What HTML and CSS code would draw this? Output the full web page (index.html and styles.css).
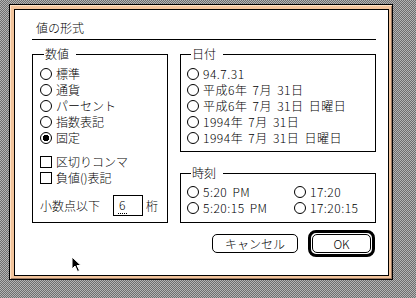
FILE: index.html
```html
<!DOCTYPE html>
<html lang="ja">
<head>
    <meta charset="UTF-8">
    <meta name="viewport" content="width=device-width, initial-scale=1.0">
    <title>値の形式</title>
    <link rel="stylesheet" href="styles.css">
</head>
<body>
    <div class="window">
        <div class="dialog">
            <div class="title">値の形式</div>

            <div class="panes">
                <fieldset class="group number">
                    <legend>数値</legend>
                    <label class="opt"><input type="radio" name="num">標準</label>
                    <label class="opt"><input type="radio" name="num">通貨</label>
                    <label class="opt"><input type="radio" name="num">パーセント</label>
                    <label class="opt"><input type="radio" name="num">指数表記</label>
                    <label class="opt"><input type="radio" name="num" checked>固定</label>

                    <div class="checks">
                        <label class="opt"><input type="checkbox">区切りコンマ</label>
                        <label class="opt"><input type="checkbox">負値()表記</label>
                    </div>

                    <div class="digits">
                        <span>小数点以下</span>
                        <span class="field"><span class="ime">6</span></span>
                        <span>桁</span>
                    </div>
                </fieldset>

                <div class="right">
                    <fieldset class="group date">
                        <legend>日付</legend>
                        <label class="opt"><input type="radio" name="date">94.7.31</label>
                        <label class="opt"><input type="radio" name="date">平成6年 7月 31日</label>
                        <label class="opt"><input type="radio" name="date">平成6年 7月 31日 日曜日</label>
                        <label class="opt"><input type="radio" name="date">1994年 7月 31日</label>
                        <label class="opt"><input type="radio" name="date">1994年 7月 31日 日曜日</label>
                    </fieldset>

                    <fieldset class="group time">
                        <legend>時刻</legend>
                        <div class="time-grid">
                            <label class="opt"><input type="radio" name="time">5:20 PM</label>
                            <label class="opt"><input type="radio" name="time">17:20</label>
                            <label class="opt"><input type="radio" name="time">5:20:15 PM</label>
                            <label class="opt"><input type="radio" name="time">17:20:15</label>
                        </div>
                    </fieldset>
                </div>
            </div>

            <div class="actions">
                <button class="btn cancel">キャンセル</button>
                <div class="default-ring">
                    <button class="btn ok">OK</button>
                </div>
            </div>
        </div>
    </div>

    <!-- マウスカーソル -->
    <svg class="cursor" width="11" height="17" viewBox="0 0 11 17">
        <path d="M1 1 L1 13 L4 10 L6.5 15.5 L8.5 14.5 L6 9.5 L10 9.5 Z" fill="#000" stroke="#fff" stroke-width="1"/>
    </svg>
</body>
</html>
```

FILE: styles.css
```css
html, body {
    margin: 0;
    height: 298px;
    overflow: hidden;
}
body {
    padding: 4px 0 0 9px;
    box-sizing: border-box;
    background: repeating-conic-gradient(#6e6e6e 0 25%, #b4b4b4 0 50%) 0 0 / 2px 2px;
    font-family: "Noto Sans CJK JP", "Noto Sans", sans-serif;
    font-size: 12px;
    font-weight: 300;
    line-height: 16px;
    color: #000;
}
.window {
    width: 384px;
    height: 276px;
    box-sizing: border-box;
    border: 1px solid #000;
    padding: 4px 3px 3px 4px;
    background: #f2c49c;
    box-shadow: inset 1px 1px 0 #ffe2c6, inset -1px -1px 0 #9c7c66;
}
.dialog {
    height: 100%;
    box-sizing: border-box;
    border: 1px solid #000;
    background: #fff;
    padding: 10px 12px 0 17px;
}
.title {
    padding: 0 0 3px 4px;
    border-bottom: 1px solid #000;
}
.panes {
    display: flex;
    gap: 12px;
    margin-top: 6px;
}
.group {
    margin: 0;
    border: 1px solid #000;
    min-width: 0;
}
.group legend {
    margin-left: 4px;
    padding: 0 7px 0 1px;
    line-height: 16px;
}
.number {
    width: 136px;
    box-sizing: border-box;
    padding: 4px 0 6px 7px;
}
.right {
    width: 196px;
}
.date {
    padding: 4px 0 5px 6px;
}
.time {
    margin-top: 13px;
    padding: 3px 0 6px 6px;
}
.date .opt,
.time .opt {
    letter-spacing: 0.5px;
    word-spacing: 2px;
}
.opt {
    display: flex;
    align-items: center;
    height: 16px;
    gap: 4px;
    white-space: nowrap;
}
.opt input {
    appearance: none;
    margin: 0;
    width: 12px;
    height: 12px;
    border: 1px solid #000;
    background: #fff;
    flex: none;
}
.opt input[type="radio"] {
    border-radius: 50%;
}
.opt input[type="radio"]:checked {
    background: radial-gradient(circle, #000 0 3px, #fff 3.5px);
}
.checks {
    margin-top: 8px;
}
.digits {
    display: flex;
    align-items: center;
    margin-top: 9px;
    height: 21px;
}
.field {
    width: 30px;
    height: 21px;
    box-sizing: border-box;
    border: 1px solid #000;
    margin: 0 3px 0 13px;
    padding: 1px 0 0 4px;
}
.ime {
    border-bottom: 1px dotted #000;
    padding: 0 2px 0 1px;
}
.time-grid {
    display: grid;
    grid-template-columns: 107px 1fr;
}
.actions {
    display: flex;
    justify-content: flex-end;
    align-items: center;
    gap: 10px;
    margin: 7px 1px 0 0;
}
.btn {
    font: inherit;
    color: #000;
    background: #fff;
    border: 1px solid #000;
    border-radius: 5px;
    height: 19px;
    padding: 0;
    cursor: pointer;
}
.cancel {
    width: 86px;
}
.default-ring {
    border: 3px solid #000;
    border-radius: 8px;
    padding: 1px;
    display: flex;
}
.ok {
    width: 59px;
}
.cursor {
    position: absolute;
    left: 71px;
    top: 256px;
}
```
